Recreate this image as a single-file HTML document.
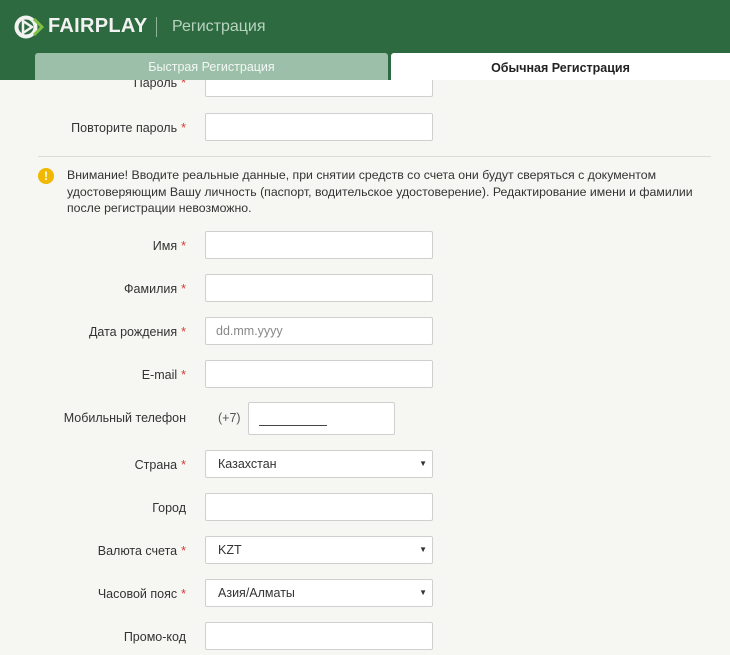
<!DOCTYPE html>
<html><head><meta charset="utf-8"><style>
*{margin:0;padding:0;box-sizing:border-box}
body{width:730px;height:655px;overflow:hidden;background:#f6f6f2;font-family:"Liberation Sans",sans-serif;font-size:12.5px;color:#333;position:relative}
.hdr{position:absolute;left:0;top:0;width:730px;height:80px;background:#2d6a3f;z-index:5}
.logo{position:absolute;left:48px;top:15px;color:#f2f2f2;font-weight:bold;font-size:20px;letter-spacing:0.3px}
.sep{position:absolute;left:156px;top:17px;width:1px;height:20px;background:#8fb39b}
.ttl{position:absolute;left:172px;top:18px;color:#b9d3c1;font-size:16px}
.tab1{position:absolute;left:35px;top:53px;width:353px;height:27px;background:#9bbfa9;border-radius:3px 3px 0 0;color:#f3f7f4;text-align:center;line-height:28px;font-size:12.5px}
.tab2{position:absolute;left:391px;top:53px;width:339px;height:27px;background:#fff;border-radius:3px 0 0 0;color:#222;font-weight:bold;text-align:center;line-height:30px;font-size:12.5px}
.lbl{position:absolute;right:544px;text-align:right;white-space:nowrap}
.lbl b{color:#d9393b;font-weight:normal;margin-left:4px}
.in{position:absolute;left:205px;width:228px;height:28px;background:#fff;border:1px solid #cfcfcf;border-radius:2px;padding-left:12px;line-height:26px;color:#333}
.sel:after{content:"▼";position:absolute;right:5px;top:0;font-size:8px;color:#333}
</style></head><body>
<div class="hdr">
<svg style="position:absolute;left:14px;top:15px" width="30" height="24" viewBox="0 0 30 24"><circle cx="12" cy="12" r="9.5" fill="none" stroke="#f2f2f2" stroke-width="4"/><path d="M9 6 L18 12 L9 18Z" fill="#2d6a3f" stroke="#f2f2f2" stroke-width="2.5" stroke-linejoin="round"/><path d="M20 4 L28 12 L20 20" fill="none" stroke="#7dc242" stroke-width="3"/></svg>
<div class="logo">FAIRPLAY</div><div class="sep"></div><div class="ttl">Регистрация</div>
<div class="tab1">Быстрая Регистрация</div><div class="tab2">Обычная Регистрация</div>
</div>
<div class="lbl" style="top:76px">Пароль<b>*</b></div><div class="in" style="top:70px;height:27px"></div>
<div class="lbl" style="top:121px">Повторите пароль<b>*</b></div><div class="in" style="top:113px"></div>
<div style="position:absolute;left:38px;top:156px;width:673px;height:1px;background:#dcdcd6"></div>
<div style="position:absolute;left:38px;top:168px;width:16px;height:16px;border-radius:50%;background:#f0b800;color:#fff;font-weight:bold;text-align:center;line-height:16px;font-size:12px">!</div>
<div style="position:absolute;left:67px;top:167px;width:650px;line-height:16.5px;font-size:12.3px;color:#333">Внимание! Вводите реальные данные, при снятии средств со счета они будут сверяться с документом удостоверяющим Вашу личность (паспорт, водительское удостоверение). Редактирование имени и фамилии после регистрации невозможно.</div>
<div class="lbl" style="top:239px">Имя<b>*</b></div><div class="in" style="top:231px"></div>
<div class="lbl" style="top:282px">Фамилия<b>*</b></div><div class="in" style="top:274px"></div>
<div class="lbl" style="top:325px">Дата рождения<b>*</b></div><div class="in" style="top:317px;color:#888;padding-left:10px">dd.mm.yyyy</div>
<div class="lbl" style="top:368px">E-mail<b>*</b></div><div class="in" style="top:360px"></div>
<div class="lbl" style="top:411px">Мобильный телефон</div>
<div style="position:absolute;left:218px;top:411px;color:#555">(+7)</div>
<div class="in" style="top:402px;left:248px;width:147px;height:33px"><div style="position:absolute;left:10px;top:22px;width:68px;height:1px;background:#444"></div></div>
<div class="lbl" style="top:458px">Страна<b>*</b></div><div class="in sel" style="top:450px">Казахстан</div>
<div class="lbl" style="top:501px">Город</div><div class="in" style="top:493px"></div>
<div class="lbl" style="top:544px">Валюта счета<b>*</b></div><div class="in sel" style="top:536px">KZT</div>
<div class="lbl" style="top:587px">Часовой пояс<b>*</b></div><div class="in sel" style="top:579px">Азия/Алматы</div>
<div class="lbl" style="top:630px">Промо-код</div><div class="in" style="top:622px"></div>
</body></html>
